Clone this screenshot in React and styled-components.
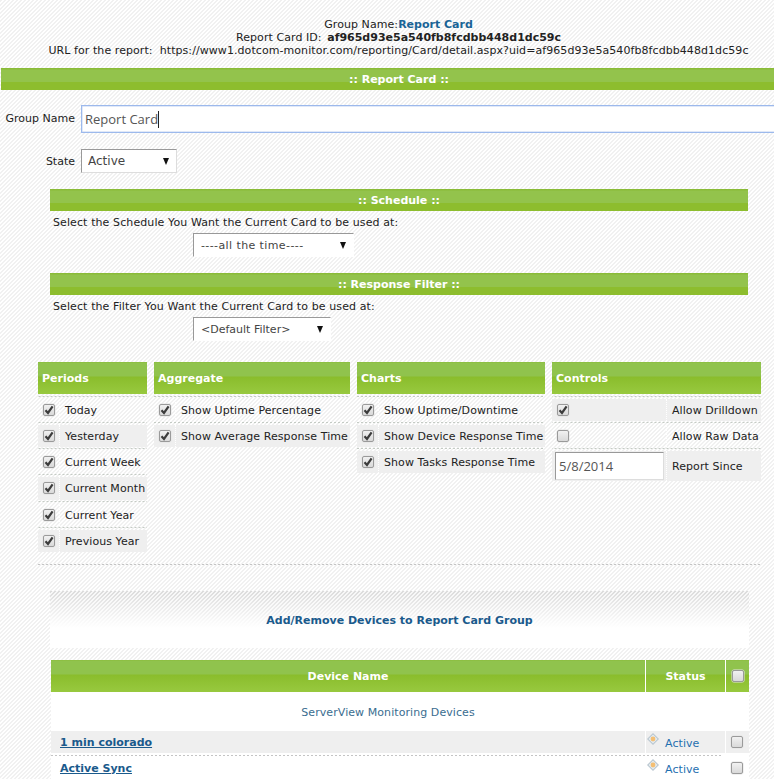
import React from 'react'
import styled, { createGlobalStyle } from 'styled-components'

const hatch = (color, base) => `
    background-color: ${base};
    background-image: linear-gradient(135deg, ${color} 25%, transparent 25%, transparent 50%, ${color} 50%, ${color} 75%, transparent 75%);
    background-size: 4px 4px;
`

const GlobalStyle = createGlobalStyle`
    html, body {
        margin: 0;
        padding: 0;
        height: 100%;
        overflow: hidden;
    }
    body {
        font-family: "DejaVu Sans", Verdana, sans-serif;
        font-size: 11px;
        letter-spacing: 0.07px;
        color: #222;
        ${hatch('#f1f1f1', '#fff')}
    }
`

const greenHead = 'linear-gradient(#8abb3a 0, #90c34d 1px, #90c34d 14px, #8abd2c 15px, #98c93f 100%)'

const Page = styled.div`
    width: 797px;
    padding-top: 18px;
`

const Intro = styled.div`
    text-align: center;
    line-height: 13px;
    white-space: nowrap;
`

const GroupTitle = styled.span`
    color: #1a6496;
    font-weight: bold;
    letter-spacing: 0;
`

const CardId = styled.b`
    letter-spacing: 0;
    margin-left: 2px;
`

const Bar = styled.div`
    height: 22px;
    line-height: 24px;
    margin-left: ${p => (p.$inset ? 0 : 1)}px;
    text-align: center;
    color: #fff;
    font-weight: bold;
    letter-spacing: 0;
    background: linear-gradient(#8abb38 0, #8abb38 1px, #93c34c 2px, #93c34c 14px, #8dbd2e 14px, #8dbd2e 100%);
`

const TopBar = styled(Bar)`
    margin-top: 11px;
`

const FieldRow = styled.div`
    display: flex;
    align-items: center;
    margin-top: ${p => p.$top}px;
`

const FieldLabel = styled.label`
    width: 75px;
    text-align: right;
    margin-right: 6px;
    padding-bottom: ${p => p.$lift || 0}px;
    flex-shrink: 0;
    letter-spacing: 0;
`

const NameField = styled.div`
    position: relative;
    flex: 1;
    display: flex;
`

const NameInput = styled.input`
    box-sizing: border-box;
    flex: 1;
    height: 28px;
    padding: 0 3px;
    background: #fff;
    border: 1px solid #9cb9ec;
    box-shadow: inset 0 0 0 0.5px #c3d3f2;
    outline: none;
    font-family: "Open Sans", sans-serif;
    font-size: 13px;
    color: #555;
`

const TextCaret = styled.span`
    position: absolute;
    left: 77px;
    top: 6px;
    width: 1px;
    height: 17px;
    background: #222;
`

const SelectWrap = styled.div`
    position: relative;
    width: ${p => p.$width}px;
    height: 24px;
    margin-left: ${p => p.$left || 0}px;
`

const Select = styled.select`
    appearance: none;
    box-sizing: border-box;
    width: 100%;
    height: 100%;
    padding: 0 0 0 ${p => (p.$framed ? 6 : 7)}px;
    background: #fff;
    border: 1px solid #fff;
    border-top-color: #999;
    border-left-color: #999;
    border-right-color: ${p => (p.$framed ? '#ddd' : '#fff')};
    border-bottom-color: ${p => (p.$framed ? '#ddd' : '#fff')};
    border-radius: 0;
    outline: none;
    font-family: "DejaVu Sans", Verdana, sans-serif;
    font-size: ${p => (p.$framed ? 12 : 11)}px;
    letter-spacing: ${p => p.$spacing || 0}px;
    color: #444;
`

const SelectCaret = styled.span`
    position: absolute;
    right: 8px;
    top: 9px;
    width: 0;
    height: 0;
    border-left: 3.5px solid transparent;
    border-right: 3.5px solid transparent;
    border-top: 7px solid #111;
    pointer-events: none;
`

const Section = styled.section`
    margin: 16px 0 0 50px;
    width: 698px;
`

const Hint = styled.div`
    line-height: 13px;
    padding: 5px 0 4px 3px;
    letter-spacing: 0.1px;
`

const Columns = styled.div`
    display: flex;
    gap: 7px;
    margin: 21px 0 0 38px;
    width: 723px;
`

const Column = styled.div`
    width: ${p => p.$width}px;
    flex-shrink: 0;
`

const ColumnHead = styled.div`
    box-sizing: border-box;
    height: 32px;
    line-height: 34px;
    padding-left: 4px;
    color: #fff;
    font-weight: bold;
    letter-spacing: 0;
    background: ${greenHead};
`

const Row = styled.div`
    margin-top: ${p => (p.$first ? 2 : 0)}px;
    padding-top: 3px;
    background-image: linear-gradient(to right, #c4cbc4 60%, transparent 60%);
    background-size: 4px 1px;
    background-repeat: repeat-x;
    background-position: top;
`

const RowCells = styled.div`
    display: flex;
    align-items: center;
    height: ${p => p.$height || 22}px;
    margin-bottom: 1px;
    background: ${p => (p.$shaded ? '#efefef' : 'transparent')};
`

const BoxCell = styled.div`
    box-sizing: border-box;
    width: ${p => p.$width || 22}px;
    height: 100%;
    padding-left: ${p => (p.$pad === undefined ? 5 : p.$pad)}px;
    display: flex;
    align-items: center;
    flex-shrink: 0;
    border-right: 1px dotted #fff;
`

const LabelCell = styled.div`
    padding-left: 5px;
    white-space: nowrap;
    line-height: 13px;
`

const Box = styled.span`
    box-sizing: border-box;
    display: inline-flex;
    align-items: center;
    justify-content: center;
    width: 12px;
    height: 12px;
    margin-top: -1px;
    border: 1px solid #9a9a9a;
    border-radius: 2px;
    background: linear-gradient(#f1f1f1, #d9d9d9);
    box-shadow: 0 0 0 0.5px #e4e4e4;
    flex-shrink: 0;
`

const SinceInput = styled.input`
    box-sizing: border-box;
    width: 109px;
    height: 28px;
    padding: 0 3px;
    background: #fff;
    border: 1px solid #ddd;
    border-top: 1px solid #999;
    border-left: 1px solid #999;
    outline: none;
    font-family: "Open Sans", sans-serif;
    font-size: 13px;
    color: #555;
`

const Divider = styled.div`
    height: 1px;
    width: 723px;
    margin: 11px 0 0 38px;
    background-image: linear-gradient(to right, #c4c4c4 60%, transparent 60%);
    background-size: 4px 1px;
`

const DevicesBlock = styled.div`
    width: 699px;
    height: 57px;
    margin: 26px 0 0 50px;
    background-color: #f7f7f7;
    background-image:
        linear-gradient(rgba(255, 255, 255, 0) 0, #fff 37px),
        linear-gradient(135deg, #dcdcdc 25%, transparent 25%, transparent 50%, #dcdcdc 50%, #dcdcdc 75%, transparent 75%);
    background-size: 100% 100%, 4px 4px;
    text-align: center;
    line-height: 59px;
    color: #1a5a8c;
    font-weight: bold;
    letter-spacing: 0;
`

const Table = styled.div`
    width: 698px;
    margin: 12px 0 0 51px;
    background: #fff;
`

const TableGrid = styled.div`
    display: grid;
    grid-template-columns: 594px 80px 24px;
    height: ${p => p.$height}px;
`

const HeadCell = styled.div`
    display: flex;
    align-items: center;
    justify-content: center;
    color: #fff;
    font-weight: bold;
    letter-spacing: 0;
    border-left: ${p => (p.$split ? '1px solid #fff' : 'none')};
    background: ${greenHead};
`

const GroupRow = styled.div`
    height: 39px;
    line-height: 41px;
    padding-right: 24px;
    text-align: center;
    color: #3a6d90;
`

const DeviceCell = styled.div`
    display: flex;
    align-items: center;
    height: 22px;
    padding-left: ${p => p.$pad || 0}px;
    background: ${p => (p.$shaded ? '#efefef' : '#fff')};
    border-left: ${p => (p.$split ? '1px solid #fff' : 'none')};
`

const DeviceLink = styled.a`
    color: #1a5a8c;
    font-weight: bold;
    letter-spacing: 0;
    text-decoration: underline;
`

const StatusText = styled.span`
    color: #1f6fb0;
    margin-left: 6px;
    position: relative;
    top: 1px;
`

const DeviceDash = styled.div`
    height: 1px;
    width: 672px;
    margin: 2px 0 1px;
    background-image: linear-gradient(to right, #c4c4c4 60%, transparent 60%);
    background-size: 4px 1px;
`

const Tick = () => (
    <svg width="10" height="10" viewBox="0 0 10 10">
        <path d="M1.5 5.2 L4 8 L8.6 1.4" fill="none" stroke="#3c3c3c" strokeWidth="2.2" />
    </svg>
)

const CheckBox = ({ checked }) => <Box>{checked && <Tick />}</Box>

const StatusIcon = () => (
    <svg width="12" height="12" viewBox="0 0 12 12" style={{ marginTop: -6 }}>
        <path d="M6 0 L12 6 L6 12 L0 6 Z" fill="#b9c6cf" />
        <path d="M6 1.5 L10.5 6 L6 10.5 L1.5 6 Z" fill="#e6edf2" />
        <circle cx="6" cy="6" r="2.4" fill="#f4bf74" />
    </svg>
)

const periods = ['Today', 'Yesterday', 'Current Week', 'Current Month', 'Current Year', 'Previous Year']
const aggregates = ['Show Uptime Percentage', 'Show Average Response Time']
const charts = ['Show Uptime/Downtime', 'Show Device Response Time', 'Show Tasks Response Time']
const devices = ['1 min colorado', 'Active Sync']

const App = () => {
    return (
        <>
            <GlobalStyle />
            <Page>
                <Intro>
                    <div>Group Name:<GroupTitle>Report Card</GroupTitle></div>
                    <div>Report Card ID: <CardId>af965d93e5a540fb8fcdbb448d1dc59c</CardId></div>
                    <div>URL for the report:&nbsp; https://www1.dotcom-monitor.com/reporting/Card/detail.aspx?uid=af965d93e5a540fb8fcdbb448d1dc59c</div>
                </Intro>

                <TopBar>:: Report Card ::</TopBar>

                <FieldRow $top={15}>
                    <FieldLabel $lift={2}>Group Name</FieldLabel>
                    <NameField>
                        <NameInput defaultValue="Report Card" />
                        <TextCaret />
                    </NameField>
                </FieldRow>

                <FieldRow $top={16}>
                    <FieldLabel>State</FieldLabel>
                    <SelectWrap $width={96}>
                        <Select $framed defaultValue="Active">
                            <option>Active</option>
                        </Select>
                        <SelectCaret />
                    </SelectWrap>
                </FieldRow>

                <Section>
                    <Bar $inset>:: Schedule ::</Bar>
                    <Hint>Select the Schedule You Want the Current Card to be used at:</Hint>
                    <SelectWrap $width={161} $left={143}>
                        <Select $spacing={0.4} defaultValue="all">
                            <option value="all">----all the time----</option>
                        </Select>
                        <SelectCaret />
                    </SelectWrap>
                </Section>

                <Section>
                    <Bar $inset>:: Response Filter ::</Bar>
                    <Hint>Select the Filter You Want the Current Card to be used at:</Hint>
                    <SelectWrap $width={138} $left={143}>
                        <Select defaultValue="default">
                            <option value="default">&lt;Default Filter&gt;</option>
                        </Select>
                        <SelectCaret />
                    </SelectWrap>
                </Section>

                <Columns>
                    <Column $width={109}>
                        <ColumnHead>Periods</ColumnHead>
                        {periods.map((name, i) => (
                            <Row key={name} $first={i === 0}>
                                <RowCells $shaded={i % 2 === 1} $height={i === 3 ? 23 : 22}>
                                    <BoxCell><CheckBox checked /></BoxCell>
                                    <LabelCell>{name}</LabelCell>
                                </RowCells>
                            </Row>
                        ))}
                    </Column>

                    <Column $width={196}>
                        <ColumnHead>Aggregate</ColumnHead>
                        {aggregates.map((name, i) => (
                            <Row key={name} $first={i === 0}>
                                <RowCells $shaded={i % 2 === 1}>
                                    <BoxCell><CheckBox checked /></BoxCell>
                                    <LabelCell>{name}</LabelCell>
                                </RowCells>
                            </Row>
                        ))}
                    </Column>

                    <Column $width={188}>
                        <ColumnHead>Charts</ColumnHead>
                        {charts.map((name, i) => (
                            <Row key={name} $first={i === 0}>
                                <RowCells $shaded={i > 0}>
                                    <BoxCell><CheckBox checked /></BoxCell>
                                    <LabelCell>{name}</LabelCell>
                                </RowCells>
                            </Row>
                        ))}
                    </Column>

                    <Column $width={209}>
                        <ColumnHead>Controls</ColumnHead>
                        <Row $first>
                            <RowCells $shaded>
                                <BoxCell $width={115}><CheckBox checked /></BoxCell>
                                <LabelCell>Allow Drilldown</LabelCell>
                            </RowCells>
                        </Row>
                        <Row>
                            <RowCells>
                                <BoxCell $width={115}><CheckBox /></BoxCell>
                                <LabelCell>Allow Raw Data</LabelCell>
                            </RowCells>
                        </Row>
                        <Row>
                            <RowCells $shaded $height={30}>
                                <BoxCell $width={115} $pad={3}><SinceInput defaultValue="5/8/2014" /></BoxCell>
                                <LabelCell>Report Since</LabelCell>
                            </RowCells>
                        </Row>
                    </Column>
                </Columns>

                <Divider />

                <DevicesBlock>Add/Remove Devices to Report Card Group</DevicesBlock>

                <Table>
                    <TableGrid $height={32}>
                        <HeadCell>Device Name</HeadCell>
                        <HeadCell $split>Status</HeadCell>
                        <HeadCell $split><Box /></HeadCell>
                    </TableGrid>
                    <GroupRow>ServerView Monitoring Devices</GroupRow>
                    {devices.map((name, i) => (
                        <div key={name}>
                            <TableGrid $height={22}>
                                <DeviceCell $pad={9} $shaded={i % 2 === 0}>
                                    <DeviceLink href="#">{name}</DeviceLink>
                                </DeviceCell>
                                <DeviceCell $pad={1} $split $shaded={i % 2 === 0}>
                                    <StatusIcon />
                                    <StatusText>Active</StatusText>
                                </DeviceCell>
                                <DeviceCell $pad={5} $split $shaded={i % 2 === 0}>
                                    <Box />
                                </DeviceCell>
                            </TableGrid>
                            <DeviceDash />
                        </div>
                    ))}
                </Table>
            </Page>
        </>
    )
}

export default App
